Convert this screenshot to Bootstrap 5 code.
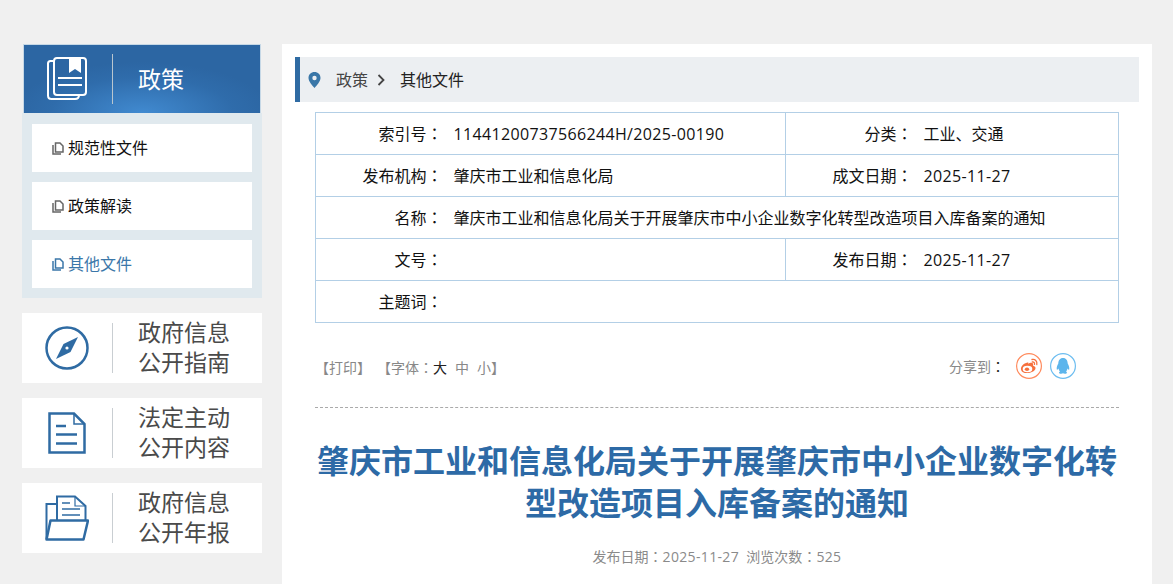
<!DOCTYPE html>
<html lang="zh-CN">
<head>
<meta charset="utf-8">
<title>其他文件</title>
<link href="https://cdn.jsdelivr.net/npm/bootstrap@5.3.0/dist/css/bootstrap.min.css" rel="stylesheet">
<style>
html,body{height:584px;overflow:hidden}
body{background:#f0f0f0;font-family:"Open Sans","Noto Sans CJK SC",sans-serif;color:#222;text-spacing-trim:space-all}
.pg{padding:44px 21px 0 22px;gap:20px;height:584px}
.side{width:240px;flex:none}
.shead{height:69px;margin:0 1px;border:1px solid #c6d8e6;border-bottom:0;background:radial-gradient(ellipse 55% 75% at 50% 100%,#418ad0 0,#2f6cab 70%,#2c66a3 100%);color:#fff;font-size:23px}
.sico{width:88px;flex:none;padding-left:23px}
.vline{width:1px;height:50px;background:#c9ced2;flex:none}
.shead .vline{background:#b9c6cf}
.stitle{padding-left:25px;line-height:30px}
.promo .stitle{padding-bottom:3px}
.spanel{background:#e0e9ee;padding:11px 10px 10px;gap:10px}
.sitem{height:48px;background:#fff;padding-left:20px;font-size:16px;color:#111;text-decoration:none;gap:4px}
.sitem.on{color:#3b77a9}
.promo{height:70px;margin-top:15px;background:#fff;font-size:23px;color:#4a4a4a;text-decoration:none;line-height:30px}
.pico{width:90px;flex:none;justify-content:center}
.main{width:870px;flex:none;background:#fff;padding:13px 13px 0}
.crumb{height:45px;background:#eceff2;border-left:5px solid #2f6ba3;padding-left:8px;font-size:16px;color:#444}
.crumb .cur{color:#222;margin-left:15px}
.pin{margin-right:15px}
.chev{margin-left:9px}
.infowrap{padding:10px 20px 0}
.infotb{width:804px;table-layout:fixed;border-collapse:collapse;margin:0;font-size:16px;color:#111}
.infotb td{border:1px solid #b3cfe6;height:42px;padding:0 0 0 10px;vertical-align:middle}
.infotb td.lb{text-align:right;padding:0 1px 0 0;border-right:0}
.infotb td.lb + td{border-left:0}
.cln{font-family:"Noto Sans CJK TC",sans-serif}
.num{letter-spacing:.35px}
.tools{padding:0 20px;margin-top:28px;height:56px;font-size:14px;color:#888}
.tools .big{color:#222}
.tgap{margin-left:6px}
.fsz{margin-left:8px}
.prt{padding-top:6px}
.share{padding-right:43px;gap:8px;margin-top:2px}
.shlabel{margin-right:3px}
.shlabel .cln{color:#222}
.shico{width:26px;height:26px;display:block}
.dash{margin:0 20px;border-top:1px dashed #aaa}
.ttl{margin:32px 20px 0;font-size:32px;line-height:42px;font-weight:700;color:#2d6aa6;text-align:center}
.meta{margin-top:22px;font-size:14px;color:#8a8a8a;text-align:center}
</style>
</head>
<body>
<div class="pg d-flex">
  <aside class="side">
    <div class="shead d-flex align-items-center">
      <div class="sico">
        <svg width="42" height="44" viewBox="0 0 42 44" fill="none" stroke="#fff" stroke-width="2"><path d="M6 4H3.500Q1 4 1 6.500V38.500Q1 42 4.500 42H28Q32 42 32 38"/><rect x="7" y="1" width="32" height="37" rx="3"/><path d="M22 1H34V16L28 12L22 16Z" fill="#fff" stroke="none"/><path d="M11 21H35M11 28H35" stroke-width="1.800"/></svg>
      </div>
      <div class="vline"></div>
      <div class="stitle">政策</div>
    </div>
    <div class="spanel d-flex flex-column">
      <a class="sitem d-flex align-items-center" href="#"><svg width="12" height="13" viewBox="0 0 12 13" fill="none" stroke="#666" stroke-width="1.500"><path d="M1 3V12H9"/><path d="M3.500 1H8L11 4V10H3.500Z"/></svg>规范性文件</a>
      <a class="sitem d-flex align-items-center" href="#"><svg width="12" height="13" viewBox="0 0 12 13" fill="none" stroke="#666" stroke-width="1.500"><path d="M1 3V12H9"/><path d="M3.500 1H8L11 4V10H3.500Z"/></svg>政策解读</a>
      <a class="sitem on d-flex align-items-center" href="#"><svg width="12" height="13" viewBox="0 0 12 13" fill="none" stroke="currentColor" stroke-width="1.500"><path d="M1 3V12H9"/><path d="M3.500 1H8L11 4V10H3.500Z"/></svg>其他文件</a>
    </div>
    <a class="promo d-flex align-items-center" href="#">
      <div class="pico d-flex"><svg width="44" height="44" viewBox="0 0 44 44" fill="none"><circle cx="22" cy="22" r="20.500" stroke="#2f6ba3" stroke-width="2.500"/><path d="M33 11L25.500 26L11 33L18.500 18Z" fill="#2f6ba3"/><circle cx="22" cy="22" r="1.600" fill="#fff"/></svg></div>
      <div class="vline"></div>
      <div class="stitle">政府信息<br>公开指南</div>
    </a>
    <a class="promo d-flex align-items-center" href="#">
      <div class="pico d-flex"><svg width="38" height="42" viewBox="0 0 38 42" fill="none" stroke="#2f6ba3" stroke-width="2.500"><path d="M1.500 1.500H26L36.500 12V40.500H1.500Z"/><path d="M26 1.500V12H36.500" stroke-width="1.500"/><path d="M8 14H18M8 22.500H29M8 31.500H29" stroke-width="2.600"/></svg></div>
      <div class="vline"></div>
      <div class="stitle">法定主动<br>公开内容</div>
    </a>
    <a class="promo d-flex align-items-center" href="#">
      <div class="pico d-flex"><svg width="44" height="47" viewBox="0 0 44 47" fill="none" stroke="#2f6ba3" stroke-width="2"><path d="M12 9H1.500V44"/><path d="M12 25V1.500H30L40.500 11V25"/><path d="M30 1.500V11H40.500" stroke-width="1.200"/><path d="M17 8H25M17 14H35M17 20H35" stroke-width="1.500"/><path d="M5.500 25.500H43L38.500 44.500H1.500Z" stroke-width="2.500" stroke-linejoin="round"/></svg></div>
      <div class="vline"></div>
      <div class="stitle">政府信息<br>公开年报</div>
    </a>
  </aside>
  <main class="main">
    <div class="crumb d-flex align-items-center">
      <svg width="13" height="16" viewBox="0 0 13 16" class="pin"><path fill-rule="evenodd" d="M6.500 0C10 0 12.500 2.500 12.500 6C12.500 9.500 8.500 13.500 6.500 16C4.500 13.500.5 9.500.5 6C.5 2.500 3 0 6.500 0ZM6.500 3.800A2.200 2.200 0 1 0 6.500 8.200A2.200 2.200 0 1 0 6.500 3.800Z" fill="#3a77a8"/></svg>
      <span>政策</span>
      <svg width="8" height="12" viewBox="0 0 8 12" fill="none" stroke="#444" stroke-width="1.800" class="chev"><path d="M1.500 1L6.500 6L1.500 11"/></svg>
      <span class="cur">其他文件</span>
    </div>
    <div class="infowrap">
      <table class="infotb">
        <colgroup><col style="width:128px"><col style="width:342px"><col style="width:128px"><col></colgroup>
        <tr><td class="lb">索引号<span class="cln" lang="zh-Hant">：</span></td><td class="num">11441200737566244H/2025-00190</td><td class="lb">分类<span class="cln" lang="zh-Hant">：</span></td><td>工业、交通</td></tr>
        <tr><td class="lb">发布机构<span class="cln" lang="zh-Hant">：</span></td><td>肇庆市工业和信息化局</td><td class="lb">成文日期<span class="cln" lang="zh-Hant">：</span></td><td class="num">2025-11-27</td></tr>
        <tr><td class="lb">名称<span class="cln" lang="zh-Hant">：</span></td><td colspan="3">肇庆市工业和信息化局关于开展肇庆市中小企业数字化转型改造项目入库备案的通知</td></tr>
        <tr><td class="lb">文号<span class="cln" lang="zh-Hant">：</span></td><td></td><td class="lb">发布日期<span class="cln" lang="zh-Hant">：</span></td><td class="num">2025-11-27</td></tr>
        <tr><td class="lb">主题词<span class="cln" lang="zh-Hant">：</span></td><td colspan="3"></td></tr>
      </table>
    </div>
    <div class="tools d-flex justify-content-between align-items-start">
      <div class="prt">【打印】<span class="tgap">【字体<span class="cln" lang="zh-Hant">：</span></span><span class="big">大</span><span class="fsz">中</span><span class="fsz">小</span>】</div>
      <div class="share d-flex align-items-center">
        <span class="shlabel">分享到<span class="cln" lang="zh-Hant">：</span></span>
        <svg class="shico" viewBox="0 0 26 26" fill="none"><circle cx="13" cy="13" r="12.400" stroke="#ff8a5c" stroke-width="1.200"/><path d="M11.500 9.500C7.500 10.500 4.500 13.500 5 16.500C5.500 19.500 9 20.500 12.500 20C16.500 19.500 19.500 17.500 19.500 15C19.500 13.500 18 13 17 12.500C17.500 11 17 9.500 14.500 9.800C13.500 10 12.500 10.500 12 11C12.500 9.500 12.500 9.300 11.500 9.500Z" fill="#f6703d"/><ellipse cx="11.500" cy="16" rx="4.800" ry="3.200" fill="#fff"/><ellipse cx="11" cy="16.300" rx="2.200" ry="1.800" fill="#f6703d"/><path d="M16 6.500C19 5.800 21.500 8 20.800 11.500M16.300 9C17.800 8.700 18.800 9.800 18.500 11.300" stroke="#f6703d" stroke-width="1.300" stroke-linecap="round"/></svg>
        <svg class="shico" viewBox="0 0 26 26" fill="none"><circle cx="13" cy="13" r="12.400" stroke="#6cbdf0" stroke-width="1.200"/><path d="M13 5C9.800 5 8.300 7.500 8.300 10.500C7.500 12 6.300 14.500 6.800 16.500C7.300 17.300 8.200 15.800 8.500 15.500C8.700 16.800 9.200 17.800 10 18.500C8.800 19 8.500 20.500 10.800 20.800C11.800 20.900 12.500 20.500 13 20.300C13.500 20.500 14.200 20.900 15.200 20.800C17.500 20.500 17.200 19 16 18.500C16.800 17.800 17.300 16.800 17.500 15.500C17.800 15.800 18.700 17.300 19.200 16.500C19.700 14.500 18.500 12 17.700 10.500C17.700 7.500 16.200 5 13 5Z" fill="#5cb5ec"/></svg>
      </div>
    </div>
    <div class="dash"></div>
    <h1 class="ttl">肇庆市工业和信息化局关于开展肇庆市中小企业数字化转型改造项目入库备案的通知</h1>
    <div class="meta">发布日期<span class="cln" lang="zh-Hant">：</span><span class="num">2025-11-27</span>&nbsp;&nbsp;浏览次数<span class="cln" lang="zh-Hant">：</span><span class="num">525</span></div>
  </main>
</div>
<script src="https://cdn.jsdelivr.net/npm/bootstrap@5.3.0/dist/js/bootstrap.bundle.min.js"></script>
</body>
</html>
